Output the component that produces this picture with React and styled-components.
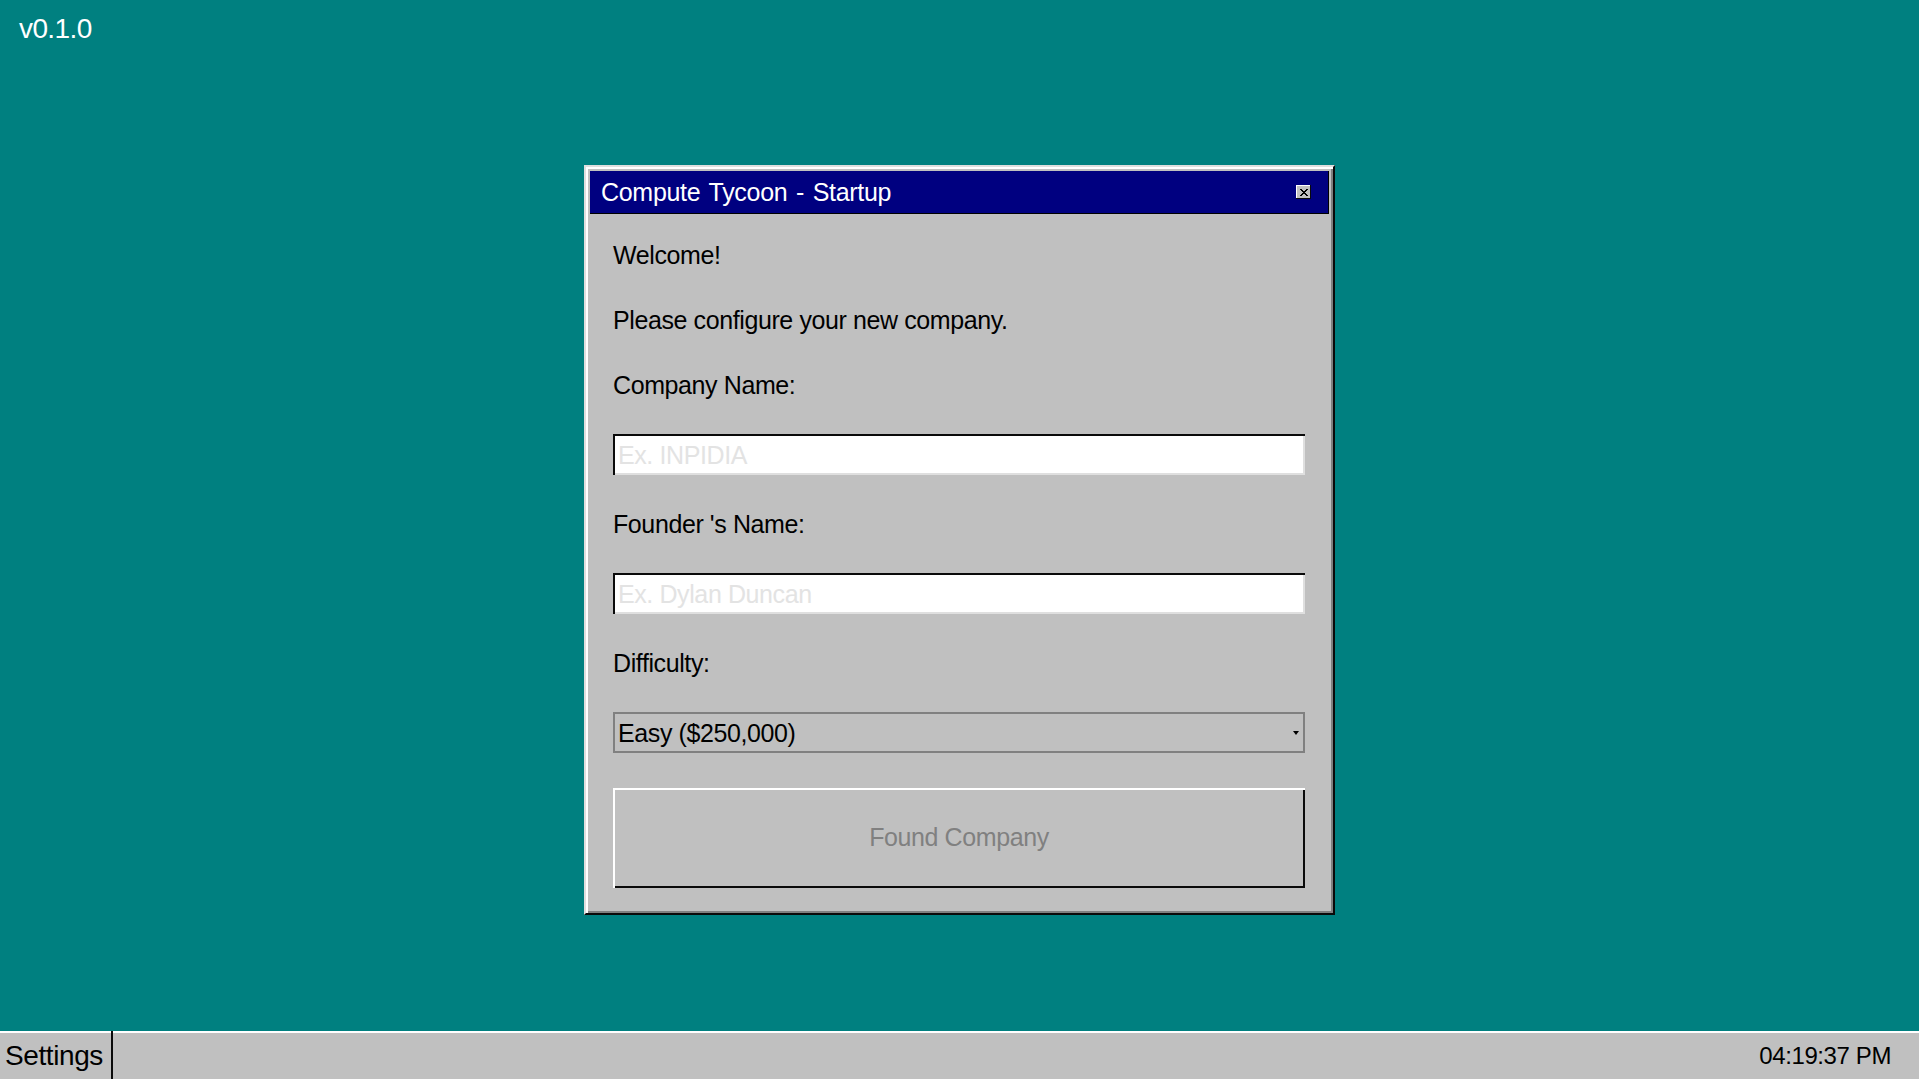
import React from 'react';
import styled, { createGlobalStyle } from 'styled-components';

const colors = {
  desktop: '#008080',
  face: '#c0c0c0',
  navy: '#000080',
  light: '#dfdfdf',
  shadow: '#808080',
  dark: '#0a0a0a',
  placeholder: '#e3e3e3',
};

const font = `"Liberation Sans", Arial, sans-serif`;

const GlobalStyle = createGlobalStyle`
  html, body {
    margin: 0;
    padding: 0;
    height: 100%;
    overflow: hidden;
  }
  body {
    font-family: ${font};
    background: ${colors.desktop};
  }
  #root {
    height: 100%;
  }
`;

const App = () => {
  return (
    <>
      <GlobalStyle />
      <Desktop>
        <Version>v0.1.0</Version>
        <Stage>
          <Window>
            <TitleBar>
              <TitleText>Compute Tycoon - Startup</TitleText>
              <CloseButton aria-label="Close">
                <svg width="8" height="7" viewBox="0 0 8 7">
                  <path d="M0 0h2v1h1v1h2V1h1V0h2v1H7v1H6v1H5v1h1v1h1v1h1v1H6V6H5V5H3v1H2v1H0V6h1V5h1V4h1V3H2V2H1V1H0z" fill="#000" />
                </svg>
              </CloseButton>
            </TitleBar>
            <Body>
              <Line>Welcome!</Line>
              <Line>Please configure your new company.</Line>
              <Line>Company Name:</Line>
              <Field placeholder="Ex. INPIDIA" />
              <Line>Founder 's Name:</Line>
              <Field placeholder="Ex. Dylan Duncan" />
              <Line>Difficulty:</Line>
              <SelectWrap>
                <Select defaultValue="easy">
                  <option value="easy">Easy ($250,000)</option>
                  <option value="medium">Medium ($100,000)</option>
                  <option value="hard">Hard ($50,000)</option>
                </Select>
                <Arrow />
              </SelectWrap>
              <FoundButton disabled>Found Company</FoundButton>
            </Body>
          </Window>
        </Stage>
        <Taskbar>
          <TaskButton>Settings</TaskButton>
          <Clock>04:19:37 PM</Clock>
        </Taskbar>
      </Desktop>
    </>
  );
};

const Desktop = styled.div`
  height: 100vh;
  display: grid;
  grid-template-rows: 48px 1fr 48px;
  background: ${colors.desktop};
`;

const Version = styled.div`
  color: #fff;
  font-size: 28px;
  letter-spacing: -0.6px;
  line-height: 1;
  padding: 15px 0 0 19px;
`;

const Stage = styled.div`
  display: flex;
  align-items: center;
  justify-content: center;
`;

const Window = styled.div`
  width: 751px;
  height: 750px;
  box-sizing: border-box;
  background: ${colors.face};
  border-top: 2px solid ${colors.light};
  border-left: 2px solid ${colors.light};
  border-right: 2px solid ${colors.dark};
  border-bottom: 2px solid ${colors.dark};
  box-shadow: inset 2px 2px 0 #fff, inset -2px -2px 0 ${colors.shadow};
  padding: 4px;
  display: flex;
  flex-direction: column;
`;

const TitleBar = styled.div`
  height: 43px;
  flex: none;
  background: ${colors.navy};
  box-shadow: inset 0 -1px 0 #000, inset -1px 0 0 #000;
  display: flex;
  align-items: center;
  justify-content: space-between;
  padding: 0 18px 0 11px;
`;

const TitleText = styled.span`
  color: #fff;
  font-size: 25px;
  letter-spacing: -0.3px;
  word-spacing: 2px;
`;

const CloseButton = styled.button`
  width: 15px;
  height: 14px;
  padding: 0;
  background: ${colors.face};
  border: none;
  box-shadow: inset -1px -1px 0 ${colors.dark}, inset 1px 1px 0 #fff;
  display: flex;
  align-items: center;
  justify-content: center;
`;

const Body = styled.div`
  flex: 1;
  display: flex;
  flex-direction: column;
  gap: 33px;
  padding: 25px 24px 0 23px;
`;

const Line = styled.div`
  font-size: 25px;
  letter-spacing: -0.4px;
  line-height: 32px;
  height: 32px;
  color: #000;
`;

const Field = styled.input`
  height: 41px;
  box-sizing: border-box;
  background: #fff;
  border: none;
  box-shadow: inset 2px 2px 0 ${colors.dark}, inset -2px -2px 0 ${colors.light};
  padding: 2px 4px 0 5px;
  font-family: ${font};
  font-size: 25px;
  letter-spacing: -0.4px;
  color: #000;
  outline: none;
  &::placeholder {
    color: ${colors.placeholder};
  }
`;

const SelectWrap = styled.div`
  position: relative;
  height: 41px;
`;

const Select = styled.select`
  appearance: none;
  width: 100%;
  height: 41px;
  box-sizing: border-box;
  background: ${colors.face};
  border: none;
  box-shadow: inset 2px 2px 0 ${colors.shadow}, inset 0 2px 0 #fff, inset -2px -2px 0 ${colors.shadow};
  padding: 2px 0 0 5px;
  font-family: ${font};
  font-size: 25px;
  letter-spacing: -0.4px;
  color: #000;
  outline: none;
`;

const Arrow = styled.span`
  position: absolute;
  right: 6px;
  top: 19px;
  width: 0;
  height: 0;
  border-left: 3px solid transparent;
  border-right: 3px solid transparent;
  border-top: 4px solid #000;
  pointer-events: none;
`;

const FoundButton = styled.button`
  margin-top: 2px;
  height: 100px;
  background: ${colors.face};
  border: none;
  box-shadow: inset 2px 2px 0 #fff, inset -2px -2px 0 ${colors.dark};
  font-family: ${font};
  font-size: 25px;
  letter-spacing: -0.4px;
  color: ${colors.shadow};
`;

const Taskbar = styled.div`
  background: ${colors.face};
  box-shadow: inset 0 2px 0 #fff;
  display: flex;
  align-items: stretch;
  justify-content: space-between;
`;

const TaskButton = styled.button`
  width: 113px;
  padding: 2px 0 0 5px;
  text-align: left;
  background: ${colors.face};
  border: none;
  border-right: 2px solid ${colors.dark};
  box-shadow: inset 0 2px 0 #fff;
  font-family: ${font};
  font-size: 28px;
  letter-spacing: -0.4px;
  color: #000;
`;

const Clock = styled.div`
  display: flex;
  align-items: center;
  padding: 2px 28px 0 0;
  font-size: 24px;
  letter-spacing: -0.4px;
  color: #000;
`;

export default App;
